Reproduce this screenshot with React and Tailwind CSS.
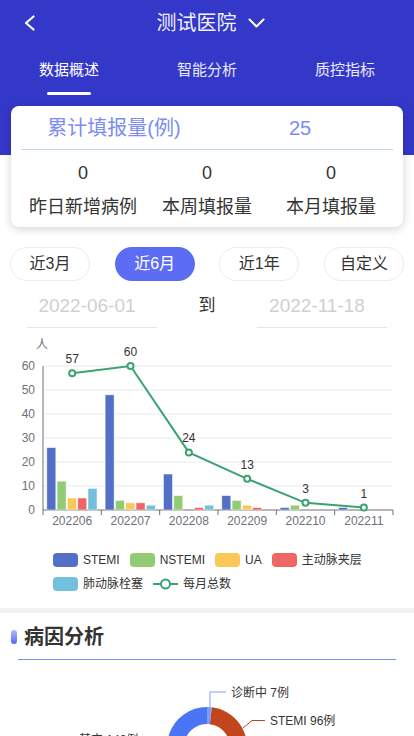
import React from 'react';

const months = ['202206', '202207', '202208', '202209', '202210', '202211'];
const series = [
  { name: 'STEMI', color: '#5470c6', data: [26, 48, 15, 6, 1, 1] },
  { name: 'NSTEMI', color: '#91cc75', data: [12, 4, 6, 4, 2, 0] },
  { name: 'UA', color: '#fac858', data: [5, 3, 0, 2, 0, 0] },
  { name: '主动脉夹层', color: '#ee6666', data: [5, 3, 1, 1, 0, 0] },
  { name: '肺动脉栓塞', color: '#73c0de', data: [9, 2, 2, 0, 0, 0] },
];
const totals = [57, 60, 24, 13, 3, 1];

const X0 = 43;
const X1 = 393;
const Y0 = 175;
const UNIT = 2.4;
const CAT = (X1 - X0) / 6;

const BarChart = () => {
  const pts = totals.map((v, i) => [X0 + CAT * (i + 0.5), Y0 - v * UNIT]);
  return (
    <svg width="414" height="200" className="block" fontFamily="'Liberation Sans', 'Noto Sans CJK SC', sans-serif">
      <text x="42" y="14" fontSize="12" fill="#6e7079" textAnchor="middle">人</text>
      {[0, 10, 20, 30, 40, 50, 60].map((v) => (
        <g key={v}>
          {v > 0 && <line x1={X0} x2={X1} y1={Y0 - v * UNIT} y2={Y0 - v * UNIT} stroke="#e8ebf3" strokeWidth="1" />}
          <text x="35" y={Y0 - v * UNIT + 4} fontSize="12" fill="#6e7079" textAnchor="end">{v}</text>
        </g>
      ))}
      <line x1={X0} x2={X0} y1="31" y2={Y0} stroke="#6e7079" strokeWidth="1" />
      <line x1={X0} x2={X1} y1={Y0} y2={Y0} stroke="#6e7079" strokeWidth="1" />
      {[0, 1, 2, 3, 4, 5, 6].map((i) => (
        <line key={i} x1={X0 + CAT * i} x2={X0 + CAT * i} y1={Y0} y2={Y0 + 5} stroke="#6e7079" strokeWidth="1" />
      ))}
      {months.map((m, i) => (
        <text key={m} x={X0 + CAT * (i + 0.5)} y="190" fontSize="12" fill="#6e7079" textAnchor="middle">{m}</text>
      ))}
      {series.map((s, si) =>
        s.data.map((v, i) =>
          v > 0 ? (
            <rect
              key={s.name + i}
              x={X0 + CAT * i + 3.8 + si * 10.3}
              y={Y0 - v * UNIT}
              width="9"
              height={v * UNIT}
              fill={s.color}
              stroke="#ffffff"
              strokeOpacity="0.6"
              strokeWidth="0.8"
            />
          ) : null
        )
      )}
      <polyline points={pts.map((p) => p.join(',')).join(' ')} fill="none" stroke="#3ba272" strokeWidth="2" />
      {pts.map((p, i) => (
        <g key={i}>
          <circle cx={p[0]} cy={p[1]} r="3" fill="#fff" stroke="#3ba272" strokeWidth="2" />
          <text x={p[0]} y={p[1] - 10} fontSize="12" fill="#333" textAnchor="middle">{totals[i]}</text>
        </g>
      ))}
    </svg>
  );
};

const slices = [
  { v: 7, color: '#7d9cff' },
  { v: 96, color: '#c1461d' },
  { v: 60, color: '#f0a336' },
  { v: 30, color: '#3fb27f' },
  { v: 15, color: '#9a60b4' },
  { v: 10, color: '#5ac8d8' },
  { v: 142, color: '#4a75f4' },
];

const pt = (cx, cy, r, a) => {
  const rad = (a * Math.PI) / 180;
  return [cx + r * Math.sin(rad), cy - r * Math.cos(rad)];
};

const arc = (cx, cy, r0, r1, a0, a1) => {
  const large = a1 - a0 > 180 ? 1 : 0;
  const [x1, y1] = pt(cx, cy, r1, a0);
  const [x2, y2] = pt(cx, cy, r1, a1);
  const [x3, y3] = pt(cx, cy, r0, a1);
  const [x4, y4] = pt(cx, cy, r0, a0);
  return `M${x1} ${y1} A${r1} ${r1} 0 ${large} 1 ${x2} ${y2} L${x3} ${y3} A${r0} ${r0} 0 ${large} 0 ${x4} ${y4} Z`;
};

const Donut = () => {
  const total = slices.reduce((a, s) => a + s.v, 0);
  let acc = 0;
  return (
    <svg width="414" height="180" className="block" fontFamily="'Liberation Sans', 'Noto Sans CJK SC', sans-serif">
      {slices.map((s, i) => {
        const a0 = (acc / total) * 360;
        acc += s.v;
        const a1 = (acc / total) * 360;
        return <path key={i} d={arc(207, 87, 23, 40, a0, a1)} fill={s.color} />;
      })}
      <polyline points="210,47 210,32 226,32" fill="none" stroke="#7d9cff" strokeWidth="1" />
      <text x="231" y="36.5" fontSize="12" fill="#333">诊断中 7例</text>
      <polyline points="243,68 252,60.5 265,60.5" fill="none" stroke="#c1461d" strokeWidth="1" />
      <text x="270" y="65" fontSize="12" fill="#333">STEMI 96例</text>
      <polyline points="143,80 156,80 168,92" fill="none" stroke="#4a75f4" strokeWidth="1" />
      <text x="79" y="84" fontSize="12" fill="#333">其它 142例</text>
    </svg>
  );
};

const LegendBox = ({ color, label }) => (
  <div className="flex items-center gap-[5px]">
    <span className="w-[25px] h-[14px] rounded-[4px]" style={{ backgroundColor: color }} />
    <span className="text-[12px] leading-[18px] text-[#333]">{label}</span>
  </div>
);

const App = () => {
  return (
    <div className="w-[414px] min-h-screen bg-white font-['Liberation_Sans','Noto_Sans_CJK_SC',sans-serif]">
      {/* Header */}
      <div className="bg-[#3438c9] h-[155px] text-white">
        <div className="grid grid-cols-[60px_1fr_60px] h-[46px] items-center">
          <div className="pl-[24px]">
            <svg width="11" height="16" viewBox="0 0 11 16">
              <polyline points="9.5,1.5 2,8 9.5,14.5" fill="none" stroke="#fff" strokeWidth="2.2" strokeLinecap="round" strokeLinejoin="round" />
            </svg>
          </div>
          <div className="flex items-center justify-center gap-[11px] pl-[7px]">
            <span className="text-[20px] leading-[28px] text-white/95">测试医院</span>
            <svg width="17" height="10" viewBox="0 0 17 10">
              <polyline points="1.5,1.5 8.5,8.5 15.5,1.5" fill="none" stroke="#fff" strokeWidth="2" strokeLinecap="round" strokeLinejoin="round" />
            </svg>
          </div>
          <div />
        </div>
        <div className="grid grid-cols-3 mt-[13px]">
          <div className="flex flex-col items-center">
            <span className="text-[15px] leading-[22px] text-white">数据概述</span>
            <span className="mt-[11px] w-[44px] h-[3px] rounded-full bg-white" />
          </div>
          <div className="flex flex-col items-center">
            <span className="text-[15px] leading-[22px] text-white/90">智能分析</span>
          </div>
          <div className="flex flex-col items-center">
            <span className="text-[15px] leading-[22px] text-white/90">质控指标</span>
          </div>
        </div>
      </div>

      {/* Summary card */}
      <div className="relative -mt-[49px] mx-[11px] bg-white rounded-[8px] shadow-[0_2px_10px_rgba(0,0,0,0.18)] px-[10px]">
        <div className="grid grid-cols-2 h-[43px] items-center text-center text-[20px] text-[#7c8cf2]">
          <span>累计填报量(例)</span>
          <span>25</span>
        </div>
        <div className="h-px bg-[#c3d6f7]" />
        <div className="grid grid-cols-3 text-center text-[#333] pt-[11px] pb-[8px]">
          {['昨日新增病例', '本周填报量', '本月填报量'].map((l) => (
            <div key={l} className="flex flex-col items-center">
              <span className="text-[18px] leading-[24px]">0</span>
              <span className="mt-[10px] text-[18px] leading-[24px]">{l}</span>
            </div>
          ))}
        </div>
      </div>

      {/* Period buttons */}
      <div className="flex justify-between px-[10px] mt-[20px]">
        {['近3月', '近6月', '近1年', '自定义'].map((b) => (
          <div
            key={b}
            className={
              b === '近6月'
                ? 'w-[80px] h-[34px] rounded-full bg-[#5c6df3] text-white text-[16px] flex items-center justify-center'
                : 'w-[80px] h-[34px] rounded-full border border-[#ececec] text-[#333] text-[16px] flex items-center justify-center'
            }
          >
            {b}
          </div>
        ))}
      </div>

      {/* Date range */}
      <div className="flex items-center px-[27px] mt-[5px]">
        <div className="w-[130px] h-[42px] border-b border-[#e6e6e6] flex items-center justify-center pr-[10px] text-[19px] text-[#d0d0d0]">
          2022-06-01
        </div>
        <div className="flex-1 text-center text-[17px] text-[#333] pb-[2px]">到</div>
        <div className="w-[130px] h-[42px] border-b border-[#e6e6e6] flex items-center justify-center pr-[10px] text-[19px] text-[#d0d0d0]">
          2022-11-18
        </div>
      </div>

      {/* Chart */}
      <div className="mt-[7px]">
        <BarChart />
      </div>

      {/* Legend */}
      <div className="pl-[53px] mt-[16px] flex flex-col gap-[6px]">
        <div className="flex items-center gap-[10px]">
          {series.slice(0, 4).map((s) => (
            <LegendBox key={s.name} color={s.color} label={s.name} />
          ))}
        </div>
        <div className="flex items-center gap-[10px]">
          <LegendBox color={series[4].color} label={series[4].name} />
          <div className="flex items-center gap-[5px]">
            <svg width="25" height="14" viewBox="0 0 25 14">
              <line x1="0" x2="25" y1="7" y2="7" stroke="#3ba272" strokeWidth="2" />
              <circle cx="12.5" cy="7" r="4.5" fill="#fff" stroke="#3ba272" strokeWidth="2" />
            </svg>
            <span className="text-[12px] leading-[18px] text-[#333]">每月总数</span>
          </div>
        </div>
      </div>

      <div className="mt-[15px] h-[5px] bg-[#f2f2f2]" />

      {/* Section title */}
      <div className="flex items-center mt-[10px] h-[28px] pl-[11px]">
        <span className="w-[6px] h-[14px] rounded-full bg-gradient-to-b from-[#b5bbff] to-[#5a62ee]" />
        <span className="ml-[7px] text-[20px] leading-[28px] font-bold text-[#333]">病因分析</span>
      </div>
      <div className="mt-[8px] mx-[18px] h-px bg-[#7d8ef3]" />

      <Donut />
    </div>
  );
};

export default App;
